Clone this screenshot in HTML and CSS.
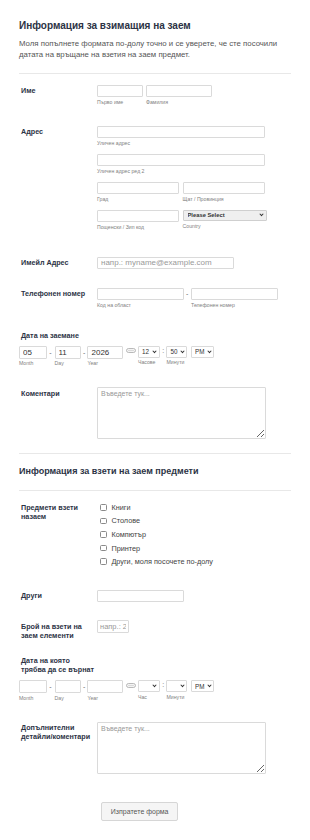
FILE: index.html
```html
<!DOCTYPE html>
<html lang="bg">
<head>
    <meta charset="UTF-8">
    <meta name="viewport" content="width=device-width, initial-scale=1.0">
    <title>Информация за взимащия на заем</title>
    <link rel="stylesheet" href="styles.css">
</head>
<body>

<form class="form">

    <!-- Заглавие -->
    <div class="form-header">
        <h1>Информация за взимащия на заем</h1>
        <p>Моля попълнете формата по-долу точно и се уверете, че сте посочили датата на връщане на взетия на заем предмет.</p>
    </div>

    <!-- Име -->
    <div class="form-line">
        <label class="form-label">Име</label>
        <div class="form-input">
            <div class="field-row">
                <div class="sub-field">
                    <input type="text" class="input w-first">
                    <span class="sublabel">Първо име</span>
                </div>
                <div class="sub-field">
                    <input type="text" class="input w-last">
                    <span class="sublabel">Фамилия</span>
                </div>
            </div>
        </div>
    </div>

    <!-- Адрес -->
    <div class="form-line">
        <label class="form-label">Адрес</label>
        <div class="form-input">
            <div class="sub-field stacked">
                <input type="text" class="input w-full">
                <span class="sublabel">Уличен адрес</span>
            </div>
            <div class="sub-field stacked">
                <input type="text" class="input w-full">
                <span class="sublabel">Уличен адрес ред 2</span>
            </div>
            <div class="field-row stacked">
                <div class="sub-field">
                    <input type="text" class="input w-half">
                    <span class="sublabel">Град</span>
                </div>
                <div class="sub-field">
                    <input type="text" class="input w-half">
                    <span class="sublabel">Щат / Провинция</span>
                </div>
            </div>
            <div class="field-row">
                <div class="sub-field">
                    <input type="text" class="input w-half">
                    <span class="sublabel">Пощенски / Зип код</span>
                </div>
                <div class="sub-field">
                    <span class="select country">
                        <select><option>Please Select</option></select>
                    </span>
                    <span class="sublabel">Country</span>
                </div>
            </div>
        </div>
    </div>

    <!-- Имейл -->
    <div class="form-line loose">
        <label class="form-label">Имейл Адрес</label>
        <div class="form-input">
            <input type="email" class="input w-email" placeholder="напр.: myname@example.com">
        </div>
    </div>

    <!-- Телефон -->
    <div class="form-line tight">
        <label class="form-label">Телефонен номер</label>
        <div class="form-input">
            <div class="field-row no-gap">
                <div class="sub-field">
                    <input type="text" class="input w-phone">
                    <span class="sublabel">Код на област</span>
                </div>
                <span class="sep phone-sep">-</span>
                <div class="sub-field">
                    <input type="text" class="input w-phone">
                    <span class="sublabel">Телефонен номер</span>
                </div>
            </div>
        </div>
    </div>

    <!-- Дата на заемане -->
    <div class="form-line top">
        <label class="form-label">Дата на заемане</label>
        <div class="date-row">
            <div class="sub-field">
                <input type="text" class="input date w-month" value="05">
                <span class="sublabel">Month</span>
            </div>
            <span class="sep date-sep">-</span>
            <div class="sub-field">
                <input type="text" class="input date w-day" value="11">
                <span class="sublabel">Day</span>
            </div>
            <span class="sep date-sep2">-</span>
            <div class="sub-field">
                <input type="text" class="input date w-year" value="2026">
                <span class="sublabel">Year</span>
            </div>
            <svg class="cal-icon" width="10" height="5" viewBox="0 0 10 5">
                <rect x="0.5" y="0.5" width="9" height="4" rx="2" fill="#f4f4f4" stroke="#a8a8a8" stroke-width="0.8"/>
                <line x1="2" y1="2.5" x2="8" y2="2.5" stroke="#c8c8c8" stroke-width="0.6"/>
            </svg>
            <div class="sub-field">
                <span class="select time w-hour"><select><option>12</option></select></span>
                <span class="sublabel">Часове</span>
            </div>
            <span class="sep colon">:</span>
            <div class="sub-field">
                <span class="select time w-min"><select><option>50</option></select></span>
                <span class="sublabel">Минути</span>
            </div>
            <div class="sub-field">
                <span class="select time w-ampm"><select><option>PM</option></select></span>
            </div>
        </div>
    </div>

    <!-- Коментари -->
    <div class="form-line">
        <label class="form-label">Коментари</label>
        <div class="form-input">
            <textarea class="textarea" placeholder="Въведете тук..."></textarea>
        </div>
    </div>

    <!-- Втора секция -->
    <div class="section-head">
        <h2>Информация за взети на заем предмети</h2>
    </div>

    <div class="form-line">
        <label class="form-label">Предмети взети назаем</label>
        <div class="form-input">
            <div class="checks">
                <label class="check"><input type="checkbox"><span>Книги</span></label>
                <label class="check"><input type="checkbox"><span>Столове</span></label>
                <label class="check"><input type="checkbox"><span>Компютър</span></label>
                <label class="check"><input type="checkbox"><span>Принтер</span></label>
                <label class="check"><input type="checkbox"><span>Други, моля посочете по-долу</span></label>
            </div>
        </div>
    </div>

    <div class="form-line other">
        <label class="form-label">Други</label>
        <div class="form-input">
            <input type="text" class="input w-phone">
        </div>
    </div>

    <div class="form-line tight">
        <label class="form-label">Брой на взети на заем елементи</label>
        <div class="form-input">
            <input type="text" class="input w-count" placeholder="напр.: 23">
        </div>
    </div>

    <!-- Дата на връщане -->
    <div class="form-line top return-date">
        <label class="form-label">Дата на която<br>трябва да се върнат</label>
        <div class="date-row">
            <div class="sub-field">
                <input type="text" class="input date w-month">
                <span class="sublabel">Month</span>
            </div>
            <span class="sep date-sep">-</span>
            <div class="sub-field">
                <input type="text" class="input date w-day">
                <span class="sublabel">Day</span>
            </div>
            <span class="sep date-sep2">-</span>
            <div class="sub-field">
                <input type="text" class="input date w-year">
                <span class="sublabel">Year</span>
            </div>
            <svg class="cal-icon" width="10" height="5" viewBox="0 0 10 5">
                <rect x="0.5" y="0.5" width="9" height="4" rx="2" fill="#f4f4f4" stroke="#a8a8a8" stroke-width="0.8"/>
                <line x1="2" y1="2.5" x2="8" y2="2.5" stroke="#c8c8c8" stroke-width="0.6"/>
            </svg>
            <div class="sub-field">
                <span class="select time w-hour"><select><option></option></select></span>
                <span class="sublabel">Час</span>
            </div>
            <span class="sep colon">:</span>
            <div class="sub-field">
                <span class="select time w-min"><select><option></option></select></span>
                <span class="sublabel">Минути</span>
            </div>
            <div class="sub-field">
                <span class="select time w-ampm"><select><option>PM</option></select></span>
            </div>
        </div>
    </div>

    <div class="form-line">
        <label class="form-label">Допълнителни детайли/коментари</label>
        <div class="form-input">
            <textarea class="textarea tall" placeholder="Въведете тук..."></textarea>
        </div>
    </div>

    <!-- Бутон -->
    <div class="form-buttons">
        <button type="button" class="submit-btn">Изпратете форма</button>
    </div>

</form>

</body>
</html>
```

FILE: styles.css
```css
/* Основа */
body {
    margin: 0;
    font-family: "Liberation Sans", Arial, sans-serif;
    color: #2c3345;
    background-color: #fff;
}

.form {
    padding: 0 19px 19px;
}

/* Заглавие */
.form-header {
    padding: 20px 0 12.5px;
    border-bottom: 1px solid #e8e8e8;
}

.form-header h1 {
    margin: 0;
    font-size: 10px;
    line-height: 12px;
    font-weight: bold;
    color: #2c3345;
}

.form-header p {
    margin: 5.5px 0 0;
    font-size: 7.8px;
    line-height: 11.3px;
    color: #555;
}

.section-head {
    margin-top: 14px;
    padding: 12px 0 12.5px;
    border-top: 1px solid #e8e8e8;
    border-bottom: 1px solid #e8e8e8;
}

.section-head h2 {
    margin: 0;
    font-size: 9px;
    line-height: 11px;
    font-weight: bold;
    color: #2c3345;
}

/* Редове */
.form-line {
    display: flex;
    align-items: flex-start;
    margin-top: 20px;
}

.form-header + .form-line,
.section-head + .form-line {
    margin-top: 11px;
}

.form-line.loose {
    margin-top: 26px;
}

.form-line.tight {
    margin-top: 18.5px;
}

.form-line.other {
    margin-top: 21.5px;
}

.form-line.top {
    display: block;
    margin-top: 20.5px;
}

.form-line.return-date {
    margin-top: 15px;
}

.form-label {
    width: 78px;
    flex-shrink: 0;
    box-sizing: border-box;
    padding: 1.5px 0 0 2px;
    font-size: 7.2px;
    line-height: 9px;
    font-weight: bold;
    color: #2c3345;
}

.form-line.top .form-label {
    display: block;
    width: auto;
    margin-bottom: 6px;
}

.form-input {
    flex: 1;
}

/* Полета */
.input {
    display: block;
    height: 12px;
    box-sizing: border-box;
    border: 1px solid #dadada;
    border-radius: 1px;
    padding: 0 3px;
    font-family: inherit;
    font-size: 8px;
    color: #333;
    background-color: #fff;
    outline: none;
}

.input::placeholder {
    color: #999;
}

.input.date {
    height: 13px;
}

.w-first { width: 45.5px; }
.w-last { width: 66px; }
.w-full { width: 167.7px; }
.w-half { width: 82px; }
.w-email { width: 136.5px; height: 12.5px; }
.w-phone { width: 86.5px; }
.w-count { width: 32px; height: 12.5px; font-size: 7.5px; padding: 0 2px; }
.w-month { width: 27.5px; }
.w-day { width: 26.3px; }
.w-year { width: 35.5px; }

.field-row {
    display: flex;
    gap: 3.5px;
}

.field-row.no-gap {
    gap: 0;
}

.stacked {
    margin-bottom: 7px;
}

.sublabel {
    display: block;
    margin-top: 2px;
    font-size: 5.2px;
    line-height: 7px;
    color: #7f7f7f;
    white-space: nowrap;
}

.sep {
    color: #666;
    font-size: 7px;
    line-height: 12px;
    text-align: center;
}

.phone-sep {
    width: 7.5px;
}

/* Дата */
.date-row {
    display: flex;
    align-items: flex-start;
}

.date-row .sublabel {
    margin-top: 1.5px;
}

.date-sep {
    width: 8px;
    line-height: 13px;
}

.date-sep2 {
    width: 6.7px;
    line-height: 13px;
}

.colon {
    width: 6.5px;
    line-height: 10px;
}

.cal-icon {
    display: block;
    margin: 2.5px 2px 0 3px;
}

/* Падащи менюта */
.select {
    position: relative;
    display: block;
}

.select select {
    display: block;
    width: 100%;
    height: 100%;
    box-sizing: border-box;
    -webkit-appearance: none;
    appearance: none;
    border: 1px solid #dadada;
    border-radius: 1px;
    background-color: #fff;
    padding: 0 2px;
    font-family: inherit;
    font-size: 6.3px;
    color: #333;
    outline: none;
}

.select::after {
    content: "";
    position: absolute;
    right: 3.5px;
    top: 50%;
    width: 2px;
    height: 2px;
    border-right: 1.2px solid #333;
    border-bottom: 1.2px solid #333;
    transform: translateY(-80%) rotate(45deg);
    pointer-events: none;
}

.select.time {
    height: 12px;
}

.select.country {
    width: 84.7px;
    height: 11px;
}

.select.country select {
    background-color: #efefef;
    border-color: #cfcfcf;
    font-weight: bold;
    font-size: 5.8px;
    padding-left: 4px;
}

.select.country::after {
    right: 4px;
}

.w-hour { width: 22px; }
.w-min { width: 21px; }
.w-ampm { width: 23.5px; margin-left: 3.5px; }

.select.time select {
    padding-left: 3px;
}

/* Текстово поле */
.textarea {
    display: block;
    width: 169.4px;
    height: 52.4px;
    box-sizing: border-box;
    border: 1px solid #dadada;
    border-radius: 1px;
    padding: 2px 3px;
    font-family: inherit;
    font-size: 7px;
    color: #333;
    resize: both;
    outline: none;
}

.textarea::placeholder {
    color: #999;
}

.textarea.tall {
    height: 51.7px;
}

/* Отметки */
.checks {
    margin-top: -1.5px;
}

.check {
    display: flex;
    align-items: center;
    height: 13.6px;
    font-size: 7.3px;
    color: #444;
}

.check input {
    -webkit-appearance: none;
    appearance: none;
    width: 6.5px;
    height: 6.5px;
    margin: 0 4.5px 0 3.4px;
    border: 1px solid #8a8a8a;
    border-radius: 1.5px;
    background-color: #fff;
}

/* Бутон */
.form-buttons {
    margin-top: 26.7px;
    padding-left: 82px;
}

.submit-btn {
    width: 77.3px;
    height: 19.3px;
    border: 1px solid #d6d6d6;
    border-radius: 2px;
    background-color: #f5f5f5;
    font-family: inherit;
    font-size: 7px;
    color: #555;
    cursor: pointer;
}

.submit-btn:hover {
    background-color: #ececec;
}
```
